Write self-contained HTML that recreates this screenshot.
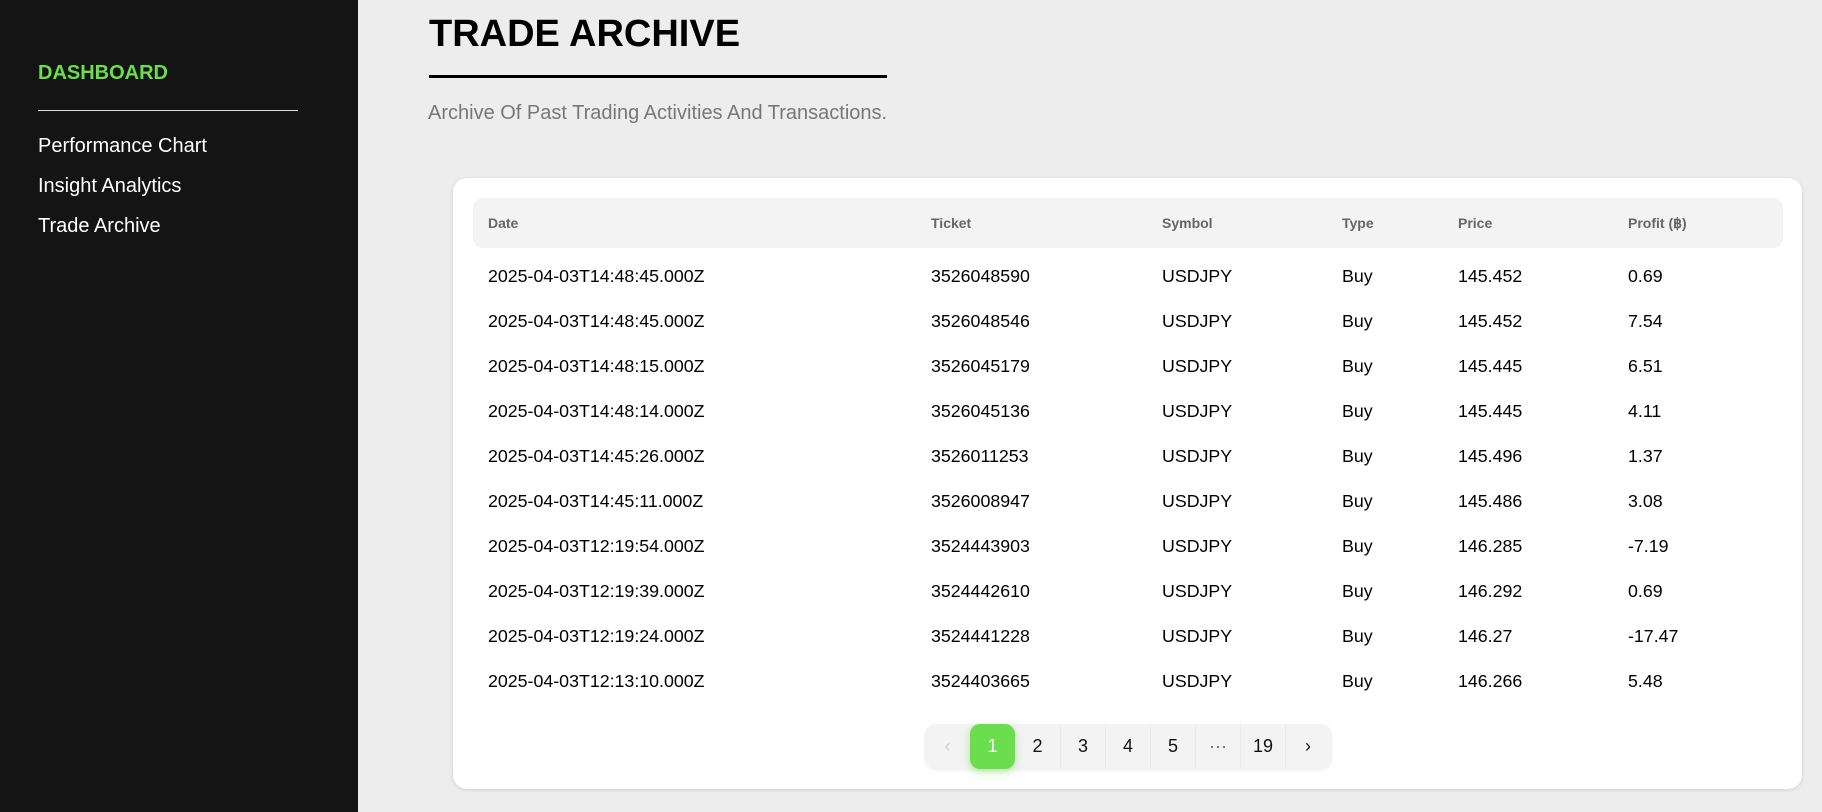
<!DOCTYPE html>
<html><head><meta charset="utf-8"><style>
*{box-sizing:border-box;margin:0;padding:0}
body{width:1822px;height:812px;background:#ededed;font-family:"Liberation Sans",Arial,sans-serif;position:relative;overflow:hidden}
.side{position:absolute;left:0;top:0;width:358px;height:812px;background:#141414}
.dash{position:absolute;left:38px;top:62px;color:#6ade4c;font-weight:bold;font-size:20px}
.hr{position:absolute;left:38px;top:110px;width:260px;height:1px;background:#ddd}
.nav{position:absolute;left:38px;color:#fff;font-size:20px}
h1{position:absolute;left:429px;top:13px;font-size:38px;font-weight:bold;color:#000}
.ul{position:absolute;left:429px;top:75px;width:458px;height:3px;background:#000}
.sub{position:absolute;left:428px;top:102px;font-size:20px;color:#777}
.card{position:absolute;left:453px;top:178px;width:1349px;height:611px;background:#fff;border-radius:14px;box-shadow:0 1px 4px rgba(0,0,0,.12)}
.head{position:absolute;left:20px;top:20px;width:1310px;height:50px;background:#f3f3f3;border-radius:10px}
.c{position:absolute;white-space:nowrap}
.hd{font-size:14px;font-weight:bold;color:#666;top:17px}
.row{position:absolute;left:0;width:100%;height:45px;font-size:17.8px;color:#000}
.row .c{top:13px}
.pg{position:absolute;left:472px;top:546px;width:407px;height:45px;background:#f3f3f3;border-radius:12px;box-shadow:0 1px 3px rgba(0,0,0,.08)}
.pi{position:absolute;top:0;width:45px;height:45px;line-height:45px;text-align:center;font-size:18px;color:#111;border-left:1px solid #eaeaea}
.act{background:#6ade4c;color:#fff;border-radius:10px;border:none;box-shadow:0 3px 8px rgba(106,222,76,.5)}
</style></head><body>
<div class="side">
<div class="dash">DASHBOARD</div>
<div class="hr"></div>
<div class="nav" style="top:135px">Performance Chart</div>
<div class="nav" style="top:175px">Insight Analytics</div>
<div class="nav" style="top:215px">Trade Archive</div>
</div>
<h1>TRADE ARCHIVE</h1>
<div class="ul"></div>
<div class="sub">Archive Of Past Trading Activities And Transactions.</div>
<div class="card">
<div class="head">
<span class="c hd" style="left:15px">Date</span>
<span class="c hd" style="left:458px">Ticket</span>
<span class="c hd" style="left:689px">Symbol</span>
<span class="c hd" style="left:869px">Type</span>
<span class="c hd" style="left:985px">Price</span>
<span class="c hd" style="left:1155px">Profit (฿)</span>
</div>
<div id="rows"></div>
<div class="pg">
<div class="pi" style="left:0;border:none;color:#ccc">‹</div>
<div class="pi act" style="left:45px">1</div>
<div class="pi" style="left:90px;border:none">2</div>
<div class="pi" style="left:135px">3</div>
<div class="pi" style="left:180px">4</div>
<div class="pi" style="left:225px">5</div>
<div class="pi" style="left:270px;color:#666">···</div>
<div class="pi" style="left:315px">19</div>
<div class="pi" style="left:360px">›</div>
</div>
</div>
<script>
var d=[["2025-04-03T14:48:45.000Z","3526048590","145.452","0.69"],["2025-04-03T14:48:45.000Z","3526048546","145.452","7.54"],["2025-04-03T14:48:15.000Z","3526045179","145.445","6.51"],["2025-04-03T14:48:14.000Z","3526045136","145.445","4.11"],["2025-04-03T14:45:26.000Z","3526011253","145.496","1.37"],["2025-04-03T14:45:11.000Z","3526008947","145.486","3.08"],["2025-04-03T12:19:54.000Z","3524443903","146.285","-7.19"],["2025-04-03T12:19:39.000Z","3524442610","146.292","0.69"],["2025-04-03T12:19:24.000Z","3524441228","146.27","-17.47"],["2025-04-03T12:13:10.000Z","3524403665","146.266","5.48"]];
var h="";d.forEach(function(r,i){h+='<div class="row" style="top:'+(75+i*45)+'px"><span class="c" style="left:35px">'+r[0]+'</span><span class="c" style="left:478px">'+r[1]+'</span><span class="c" style="left:709px">USDJPY</span><span class="c" style="left:889px">Buy</span><span class="c" style="left:1005px">'+r[2]+'</span><span class="c" style="left:1175px">'+r[3]+'</span></div>'});
document.getElementById("rows").innerHTML=h;
</script>
</body></html>
